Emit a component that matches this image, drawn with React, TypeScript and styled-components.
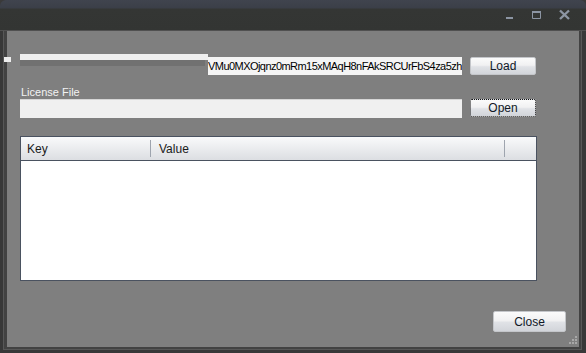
import * as React from 'react';
import styled, { createGlobalStyle } from 'styled-components'

const Global = createGlobalStyle`
  html, body {
    margin: 0;
    padding: 0;
    background: #3a3a3a;
  }
  body {
    font-family: "Liberation Sans", Arial, sans-serif;
    font-size: 11px;
  }
`

const Window = styled.div`
  position: relative;
  width: 586px;
  height: 353px;
  display: flex;
  flex-direction: column;
  background: #383838;
  border-radius: 6px 6px 0 0;
  overflow: hidden;
`

const TitleBar = styled.div`
  height: 30px;
  flex: none;
  display: flex;
  align-items: center;
  justify-content: flex-end;
  padding-right: 16px;
  background: linear-gradient(#40444e 0, #3b3f48 8px, #343634 9px, #333533 100%);
  border-bottom: 1px solid #505050;
  box-sizing: content-box;
`

const TitleButton = styled.div<{ $w: number; $ml: number }>`
  width: ${p => p.$w}px;
  height: 12px;
  margin-left: ${p => p.$ml}px;
  display: flex;
  align-items: center;
  justify-content: center;
`

const Frame = styled.div`
  flex: 1;
  display: flex;
  padding: 0 4px 3px 3px;
`

const FrameLine = styled.div`
  flex: 1;
  display: flex;
  border: 1px solid #575757;
  border-top: none;
  background: #424242;
  padding: 0 2px 2px 3px;
`

const Content = styled.div`
  position: relative;
  flex: 1;
  background: #7f7f7f;
  padding: 23px 13px 0 13px;
  display: flex;
  flex-direction: column;
`

const Row = styled.div<{ $align: string }>`
  display: flex;
  align-items: ${p => p.$align};
  gap: 8px;
`

const KeyField = styled.div`
  width: 442px;
  height: 21px;
  display: flex;
  align-items: flex-end;
`

const Shade = styled.div`
  width: 188px;
  height: 21px;
  align-self: flex-start;
  display: flex;
  flex-direction: column;
`

const ShadeStrip = styled.div<{ $c: string; $w: number }>`
  height: 6px;
  width: ${p => p.$w}px;
  background: ${p => p.$c};
`

const KeyBox = styled.div`
  width: 254px;
  height: 18px;
  line-height: 18px;
  background: #f4f4f4;
  color: #000;
  overflow: hidden;
  white-space: nowrap;
  letter-spacing: -0.55px;
`

const Label = styled.div`
  margin-top: 10px;
  height: 14px;
  line-height: 14px;
  color: #f2f2f2;
  padding-left: 1px;
`

const TextBox = styled.div`
  width: 442px;
  height: 19px;
  background: #f0f0f0;
  border-top: 1px solid #d6d6d6;
  box-sizing: border-box;
`

const Button = styled.div<{ $w: number; $h: number; $focus?: boolean }>`
  width: ${p => p.$w}px;
  height: ${p => p.$h}px;
  box-sizing: border-box;
  display: flex;
  align-items: center;
  justify-content: center;
  color: #111827;
  font-size: 12px;
  border-radius: 2px;
  border: 1px ${p => (p.$focus ? 'dotted #111' : 'solid #c4c6ca')};
  background: linear-gradient(#fbfbfb 0%, #f1f1f2 45%, #e0e2e6 55%, #d2d5da 100%);
`

const Table = styled.div`
  margin-top: 18px;
  width: 517px;
  height: 145px;
  box-sizing: border-box;
  border: 1px solid #4a5260;
  background: #fff;
  display: flex;
  flex-direction: column;
`

const Header = styled.div`
  height: 24px;
  box-sizing: border-box;
  border-bottom: 1px solid #4a5260;
  background: linear-gradient(#f9fafb, #dcdee2);
  display: grid;
  grid-template-columns: 129px 354px 1fr;
  align-items: center;
  color: #1a1a1a;
  font-size: 12px;
`

const HeadCell = styled.div<{ $sep?: boolean }>`
  height: 17px;
  line-height: 18px;
  padding-left: ${p => (p.$sep ? 8 : 6)}px;
  border-left: ${p => (p.$sep ? '1px solid #9ea4ae' : 'none')};
`

const Footer = styled.div`
  margin-top: 30px;
  display: flex;
  justify-content: flex-end;
`

const Stray = styled.div`
  position: absolute;
  left: 4px;
  top: 57px;
  width: 7px;
  height: 5px;
  background: #eeeeee;
`

const Grip = styled.svg`
  position: absolute;
  right: 2px;
  bottom: 3px;
`

export default function App() {
  return (
    <Window>
      <Global />
      <TitleBar>
        <TitleButton $w={7} $ml={0}>
          <svg width="7" height="12"><rect x="0" y="8" width="7" height="2" fill="#8c95a3" /></svg>
        </TitleButton>
        <TitleButton $w={9} $ml={19}>
          <svg width="9" height="12"><path d="M0.5 2.5h8v7h-8z" fill="none" stroke="#8c95a3" /><rect x="0" y="2" width="9" height="2" fill="#8c95a3" /></svg>
        </TitleButton>
        <TitleButton $w={11} $ml={18}>
          <svg width="11" height="12"><path d="M1 1.5l9 8.5M10 1.5l-9 8.5" stroke="#8c95a3" strokeWidth="2.4" /></svg>
        </TitleButton>
      </TitleBar>
      <Frame>
        <FrameLine>
          <Content>
            <Row $align="flex-end">
              <KeyField>
                <Shade>
                  <ShadeStrip $c="#efefef" $w={188} />
                  <ShadeStrip $c="#717171" $w={185} />
                </Shade>
                <KeyBox>VMu0MXOjqnz0mRm15xMAqH8nFAkSRCUrFbS4za5zh</KeyBox>
              </KeyField>
              <Button $w={66} $h={18}>Load</Button>
            </Row>
            <Label>License File</Label>
            <Row $align="flex-start">
              <TextBox />
              <Button $w={66} $h={18} $focus>Open</Button>
            </Row>
            <Table>
              <Header>
                <HeadCell>Key</HeadCell>
                <HeadCell $sep>Value</HeadCell>
                <HeadCell $sep />
              </Header>
            </Table>
            <Footer>
              <Button $w={73} $h={21}>Close</Button>
            </Footer>
            <Grip width="8" height="8">
              <rect x="6" y="0" width="2" height="2" fill="#a8a8a8" />
              <rect x="3" y="3" width="2" height="2" fill="#a8a8a8" />
              <rect x="6" y="3" width="2" height="2" fill="#a8a8a8" />
              <rect x="0" y="6" width="2" height="2" fill="#a8a8a8" />
              <rect x="3" y="6" width="2" height="2" fill="#a8a8a8" />
              <rect x="6" y="6" width="2" height="2" fill="#a8a8a8" />
            </Grip>
          </Content>
        </FrameLine>
      </Frame>
      <Stray />
    </Window>
  )
}
